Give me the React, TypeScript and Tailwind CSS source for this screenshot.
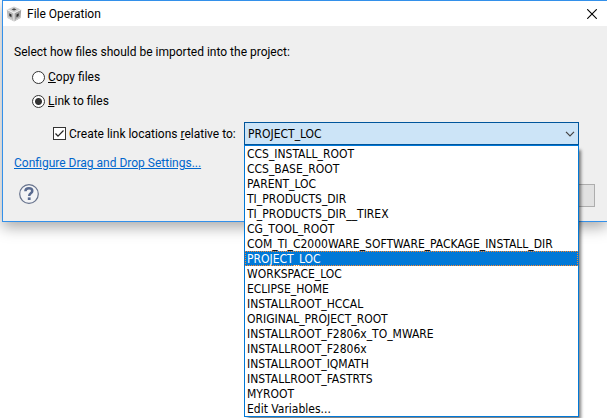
import { useState } from "react";

const variables = [
  "CCS_INSTALL_ROOT",
  "CCS_BASE_ROOT",
  "PARENT_LOC",
  "TI_PRODUCTS_DIR",
  "TI_PRODUCTS_DIR__TIREX",
  "CG_TOOL_ROOT",
  "COM_TI_C2000WARE_SOFTWARE_PACKAGE_INSTALL_DIR",
  "PROJECT_LOC",
  "WORKSPACE_LOC",
  "ECLIPSE_HOME",
  "INSTALLROOT_HCCAL",
  "ORIGINAL_PROJECT_ROOT",
  "INSTALLROOT_F2806x_TO_MWARE",
  "INSTALLROOT_F2806x",
  "INSTALLROOT_IQMATH",
  "INSTALLROOT_FASTRTS",
  "MYROOT",
  "Edit Variables...",
];

function CubeIcon() {
  return (
    <svg className="size-4 shrink-0" viewBox="0 0 16 16" aria-hidden="true">
      <path d="M8 .5 15 3.500 8 7 1 3.500Z" fill="#cfcfcf" />
      <path d="M.8 3.500 8 7v8.500L1.500 12Z" fill="#bcbcbc" />
      <path d="M15.200 3.500 8 7v8.500l6.500-3.500Z" fill="#a2a2a2" />
      <path d="M1 3.500 8 7l7-3.500M8 7v8.500" fill="none" stroke="#f4f4f4" strokeWidth="1" />
      <path d="M5.500 3.400 8 2.300l2.500 1.100L8 4.600Z" fill="#4a4a4a" />
      <path d="M3.200 7.200l2.300 1.200v2.800L3.400 10Z" fill="#303030" />
      <path d="M12.800 7.200l-2.300 1.200v2.800l2.100-1.200Z" fill="#303030" />
      <path d="M2 11.500l4.500 2.300M14 11.500l-4.500 2.300" stroke="#dedede" strokeWidth=".8" />
    </svg>
  );
}

function HelpIcon() {
  return (
    <svg className="size-5" viewBox="0 0 20 20" fill="none" aria-hidden="true">
      <circle cx="10" cy="10" r="9.300" fill="#f3f4f6" stroke="#66728c" strokeWidth="1.200" />
      <path d="M6.400 7.300C6.500 5.200 8 4.300 9.900 4.300c2 0 3.400 1 3.400 2.700 0 2.300-3.100 2.300-3.100 4.900" stroke="#5a6b90" strokeWidth="2.500" />
      <rect x="8.800" y="13.400" width="2.800" height="2.600" fill="#5a6b90" />
    </svg>
  );
}

const radioStyle =
  "size-[13px] shrink-0 appearance-none rounded-full border border-[#333333] bg-white checked:bg-[radial-gradient(circle,#333333_3px,white_4px)]";

export default function App() {
  const [mode, setMode] = useState("link");
  const [relative, setRelative] = useState(true);
  const [location, setLocation] = useState("PROJECT_LOC");

  return (
    <div className="min-h-screen overflow-hidden bg-white pb-4 pl-0.5 font-['Roboto','Open_Sans',sans-serif] text-[12px] leading-4 text-black">
      <main className="border-y border-l border-[#3390ea] bg-[#efefef] shadow-[0_5px_14px_rgba(0,0,0,0.35)]">
        <header className="flex h-[25px] items-center bg-white pl-[3px] pr-2.5">
          <CubeIcon />
          <h1 className="ml-[5px] flex-1">File Operation</h1>
          <button type="button" aria-label="Close">
            <svg className="size-[10px]" viewBox="0 0 10 10" stroke="black" strokeWidth="1.100" aria-hidden="true">
              <path d="M.2.200l9.600 9.600M9.800.200.200 9.800" />
            </svg>
          </button>
        </header>

        <form className="pb-3.5 pl-[11px] pt-[18px]">
          <fieldset className="flex flex-col items-start gap-2">
            <legend className="mb-[9px]">Select how files should be imported into the project:</legend>
            <label className="ml-[18px] flex items-center gap-[3px]">
              <input type="radio" name="mode" className={radioStyle} checked={mode === "copy"} onChange={() => setMode("copy")} />
              <span><u>C</u>opy files</span>
            </label>
            <label className="ml-[18px] flex items-center gap-[3px]">
              <input type="radio" name="mode" className={radioStyle} checked={mode === "link"} onChange={() => setMode("link")} />
              <span><u>L</u>ink to files</span>
            </label>
          </fieldset>

          <div className="mt-[13px] flex items-center pl-[39px] pr-7">
            <label className="flex w-[191px] shrink-0 items-center gap-[3px] whitespace-nowrap">
              <span className="relative flex size-[13px] shrink-0">
                <input
                  type="checkbox"
                  className="peer size-[13px] appearance-none border border-[#333333] bg-white"
                  checked={relative}
                  onChange={(e) => setRelative(e.target.checked)}
                />
                <svg className="pointer-events-none absolute inset-0 hidden peer-checked:block" viewBox="0 0 13 13" fill="none" stroke="#222" strokeWidth="1.200" aria-hidden="true">
                  <path d="M2.500 6.500 5 9.200l5.500-5.700" />
                </svg>
              </span>
              <span>Create link locations <u>r</u>elative to:</span>
            </label>
            <div className="relative flex-1 font-['DejaVu_Sans_Condensed','Open_Sans',sans-serif]">
              <select
                aria-label="Create link locations relative to"
                className="block h-[23px] w-full appearance-none border border-[#00559b] bg-[#cce4f7] pl-[3px] outline-none"
                value={location}
                onChange={(e) => setLocation(e.target.value)}
              >
                {variables.map((name) => (
                  <option key={name}>{name}</option>
                ))}
              </select>
              <svg className="pointer-events-none absolute right-1 top-[9px] h-[6px] w-[10px]" viewBox="0 0 10 6" fill="none" stroke="#444" strokeWidth="1.200" aria-hidden="true">
                <path d="M1 .8 5 4.800 9 .8" />
              </svg>
              <ul
                role="listbox"
                aria-label="Path variables"
                className="absolute inset-x-0 top-full z-10 border border-[#0078d7] bg-white shadow-[3px_4px_3px_-1px_rgba(0,0,0,0.5)]"
              >
                {variables.map((name) => (
                  <li
                    key={name}
                    role="option"
                    aria-selected={name === location}
                    onClick={() => setLocation(name)}
                    className="h-[15px] whitespace-nowrap pl-0.5 leading-[17px] outline-dotted outline-1 -outline-offset-1 outline-transparent aria-selected:bg-[#0078d7] aria-selected:text-white aria-selected:outline-[#ff8728]"
                  >
                    {name}
                  </li>
                ))}
              </ul>
            </div>
          </div>

          <a href="#settings" className="mt-2.5 block w-fit text-[#0066cc] underline">
            Configure Drag and Drop Settings...
          </a>

          <div className="mt-[13px] flex items-start justify-between pl-[5px] pr-3">
            <button type="button" aria-label="Help">
              <HelpIcon />
            </button>
            <button type="button" disabled aria-label="Cancel" className="h-[23px] w-[75px] border border-[#adadad] bg-[#e1e1e1]" />
          </div>
        </form>
      </main>
    </div>
  );
}
